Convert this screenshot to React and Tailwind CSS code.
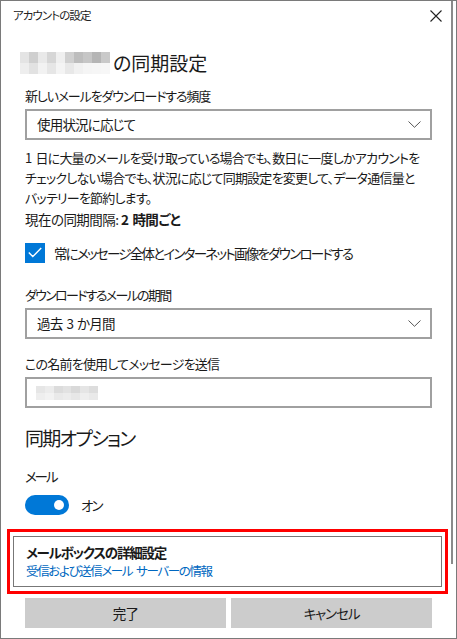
import React from "react";

const headBlur = [
  ["bg-[#e4e4e4]", "bg-[#cfcfcf]", "bg-[#e9e9e9]", "bg-[#d6d6d6]", "bg-[#efefef]", "bg-[#d0d0d0]", "bg-[#bdbdbd]", "bg-[#c6c6c6]", "bg-[#b5b5b5]", "bg-[#c9c9c9]"],
  ["bg-[#eeeeee]", "bg-[#e2e2e2]", "bg-[#f2f2f2]", "bg-[#e6e6e6]", "bg-[#f4f4f4]", "bg-[#e8e8e8]", "bg-[#f1f1f1]", "bg-[#f5f5f5]", "bg-[#f6f6f6]", "bg-[#f7f7f7]"],
];

const inputBlur = [
  ["bg-[#e6e6e6]", "bg-[#ececec]", "bg-[#dcdcdc]", "bg-[#e2e2e2]", "bg-[#d9d9d9]", "bg-[#e5e5e5]", "bg-[#dddddd]"],
  ["bg-[#eeeeee]", "bg-[#f2f2f2]", "bg-[#e9e9e9]", "bg-[#ececec]", "bg-[#e7e7e7]", "bg-[#eeeeee]", "bg-[#e9e9e9]"],
];

function Chevron() {
  return (
    <svg width="13" height="7" viewBox="0 0 13 7" className="shrink-0">
      <path d="M0.5 0.5 L6.5 6.3 L12.5 0.5" fill="none" stroke="#555" strokeWidth="1" />
    </svg>
  );
}

function Select({ children }) {
  return (
    <div className="h-[31px] border-2 border-[#a0a0a0] flex items-center justify-between pl-[10px] pr-[9px] text-[13.5px] tracking-[-0.06em] text-[#1a1a1a]">
      <span>{children}</span>
      <Chevron />
    </div>
  );
}

export default function App() {
  return (
    <div
      className="relative w-[457px] h-[639px] bg-white border border-[#7a7a7a] box-border overflow-hidden text-[#1a1a1a] [font-feature-settings:'palt']"
      style={{ fontFamily: "'Noto Sans CJK JP', 'Noto Sans', sans-serif" }}
    >
      <div className="absolute right-[3px] top-0 w-[2px] h-[563px] bg-[#8a8a8a]" />

      {/* title bar */}
      <div className="h-[29px] flex items-center justify-between pl-[12px] pr-[14px]">
        <span className="text-[11.5px] tracking-[-0.08em] text-[#222]">アカウントの設定</span>
        <svg width="12" height="12" viewBox="0 0 12 12">
          <path d="M0.5 0.5 L11.5 11.5 M11.5 0.5 L0.5 11.5" stroke="#222" strokeWidth="1.1" />
        </svg>
      </div>

      <div className="px-[24px] flex flex-col">
        {/* heading */}
        <div className="mt-[19px] h-[28px] flex items-center -ml-[5px]">
          <div className="flex flex-col w-[90px] h-[22px] mr-[3px]">
            {headBlur.map((row, i) => (
              <div key={i} className="flex flex-1">
                {row.map((c, j) => (
                  <div key={j} className={`flex-1 ${c}`} />
                ))}
              </div>
            ))}
          </div>
          <span className="text-[19px] leading-[28px] text-[#1a1a1a]">の同期設定</span>
        </div>

        <div className="mt-[9px] text-[13px] leading-[20px] tracking-[-0.09em]">新しいメールをダウンロードする頻度</div>
        <div className="mt-[3px]">
          <Select>使用状況に応じて</Select>
        </div>

        <p className="mt-[8px] text-[13px] leading-[20px] tracking-[-0.06em] whitespace-nowrap">
          <span className="mr-[4px]">1</span>日に大量のメールを受け取っている場合でも、数日に一度しかアカウントを
          <br />
          チェックしない場合でも、状況に応じて同期設定を変更して、データ通信量と
          <br />
          バッテリーを節約します。
        </p>

        <div className="mt-[1px] text-[13.5px] leading-[20px] tracking-[-0.04em]">
          現在の同期間隔: <span className="font-bold"><span className="mr-[4px]">2</span>時間ごと</span>
        </div>

        <div className="mt-[13px] h-[21px] flex items-center">
          <div className="w-[20px] h-[20px] bg-[#0078d7] flex items-center justify-center">
            <svg width="14" height="11" viewBox="0 0 14 11">
              <path d="M0.8 5.6 L4.8 9.6 L13.2 1" fill="none" stroke="#fff" strokeWidth="1.4" />
            </svg>
          </div>
          <span className="ml-[9px] text-[13.5px] leading-[20px] tracking-[-0.13em]">常にメッセージ全体とインターネット画像をダウンロードする</span>
        </div>

        <div className="mt-[22px] text-[13px] leading-[20px] tracking-[-0.13em]">ダウンロードするメールの期間</div>
        <div className="mt-[3px]">
          <Select>
            過去<span className="mx-[4px]">3</span>か月間
          </Select>
        </div>

        <div className="mt-[15px] text-[13px] leading-[20px] tracking-[-0.06em]">この名前を使用してメッセージを送信</div>
        <div className="mt-[3px] h-[31px] border-2 border-[#a0a0a0] flex items-center pl-[9px]">
          <div className="flex flex-col w-[62px] h-[14px]">
            {inputBlur.map((row, i) => (
              <div key={i} className="flex flex-1">
                {row.map((c, j) => (
                  <div key={j} className={`flex-1 ${c}`} />
                ))}
              </div>
            ))}
          </div>
        </div>

        <div className="mt-[16px] text-[19px] leading-[28px] tracking-[-0.09em]">同期オプション</div>

        <div className="mt-[14px] text-[13.5px] leading-[20px] tracking-[-0.16em]">メール</div>

        <div className="mt-[9px] h-[20px] flex items-center">
          <div className="w-[44px] h-[20px] rounded-full bg-[#0078d7] flex items-center justify-end pr-[5px]">
            <div className="w-[10px] h-[10px] rounded-full bg-white" />
          </div>
          <span className="ml-[12px] text-[13.5px] leading-[20px] tracking-[-0.14em]">オン</span>
        </div>

        {/* highlighted advanced settings */}
        <div className="mt-[14px] -ml-[18px] -mr-[16px] border-[3px] border-[#ff0000] pt-[4px] pb-[4px] pl-[3px] pr-[3px]">
          <div className="h-[51px] border border-[#777] flex flex-col justify-center pl-[12px]">
            <div className="text-[13.5px] leading-[19px] font-bold tracking-[-0.09em]">メールボックスの詳細設定</div>
            <div className="text-[12.5px] leading-[18px] tracking-[-0.11em] text-[#0067c0]">
              受信および送信メール<span className="ml-[4px]">サーバーの情報</span>
            </div>
          </div>
        </div>

        <div className="mt-[4px] flex gap-[5px]">
          <div className="flex-1 h-[30px] bg-[#cccccc] flex items-center justify-center text-[13.5px] tracking-[-0.05em]">完了</div>
          <div className="flex-1 h-[30px] bg-[#cccccc] flex items-center justify-center text-[13.5px] tracking-[-0.08em]">キャンセル</div>
        </div>
      </div>
    </div>
  );
}
